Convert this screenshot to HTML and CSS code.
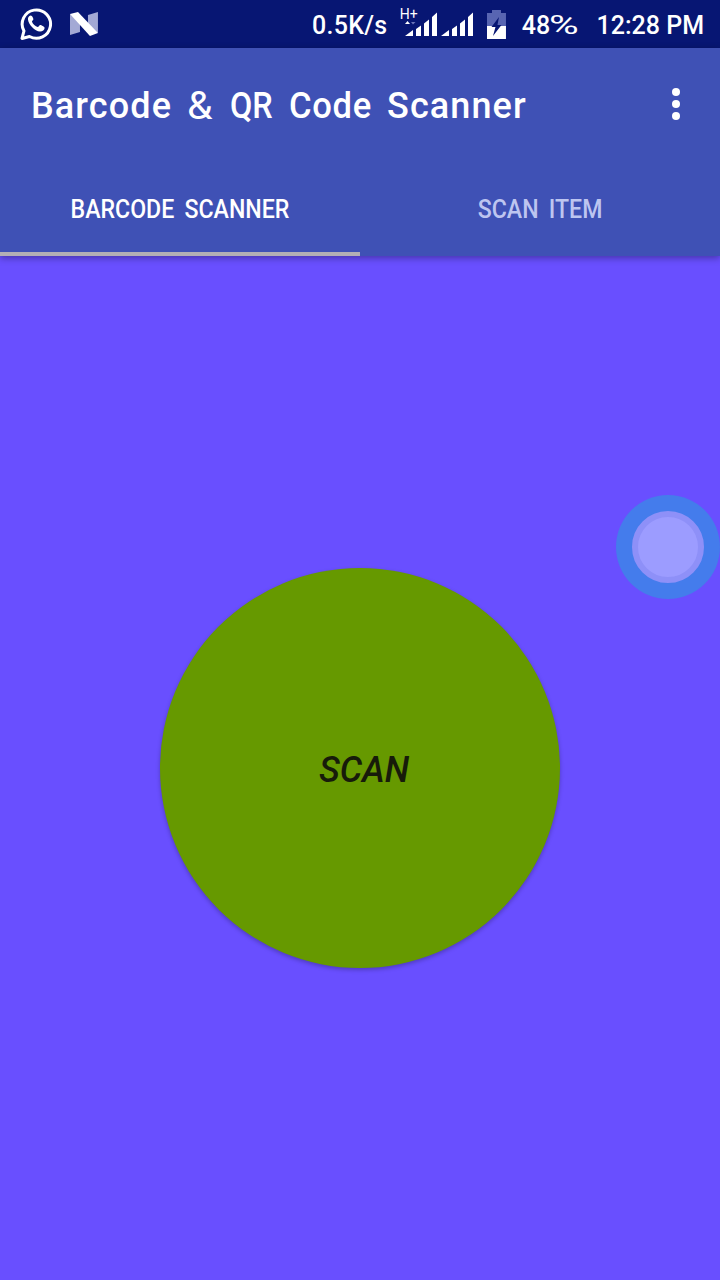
FILE: index.html
```html
<!DOCTYPE html>
<html lang="en">
<head>
<meta charset="utf-8">
<title>Barcode &amp; QR Code Scanner</title>
<link rel="stylesheet" href="styles.css">
</head>
<body>
<header class="status">
  <svg class="whatsapp" viewBox="0 0 34 34" width="34" height="34">
    <path d="M3 31.500 5 24A14.200 14.200 0 1 1 10.500 29.500Z" fill="none" stroke="#fff" stroke-width="3" stroke-linejoin="round"/>
    <path d="M11.700 8.500c-1.900.3-2.900 2.100-2.700 4 .5 4.800 6.800 12 12.100 12 2.400 0 4.600-1.400 4.600-3.700 0-1-3.400-2.700-4.300-2.800-1-.1-1.800 2.300-2.700 2.100-2.200-.5-4.900-3.200-5.700-5.300-.3-.9 1.400-1.700 1.400-2.600 0-.7-1.200-3.800-2.700-3.700Z" fill="#fff"/>
  </svg>
  <svg class="nougat" viewBox="0 0 30 26" width="30" height="26">
    <path d="M1 3 11 9V21L1 24ZM19 4 29 1V22L19 16Z" fill="#a3a9d5"/>
    <path d="M1 3 9 1 29 22 21 25Z" fill="#fff"/>
  </svg>
  <span class="speed">0.5K/s</span>
  <div class="signal">
    <span class="network">H+</span>
    <svg viewBox="0 0 74 30" width="74" height="30">
      <path d="M5 13 7.500 10 10 13Z" fill="#fff"/><path d="M11 11H15.500L13 13.500Z" fill="#6c75b9"/>
      <path d="M5 25 13 19V25ZM16 18 21 14.500V25H16ZM24 12.500 29 8.500V25H24ZM32 6 37 1.500V25H32ZM41 25 49 19V25ZM52 18 57 14.500V25H52ZM60 12.500 65 8.500V25H60ZM68 6 73 1.500V25H68Z" fill="#fff"/>
    </svg>
  </div>
  <svg class="battery" viewBox="0 0 19 29" width="19" height="29">
    <path d="M0 3H5V0H14V3H19V16H0Z" fill="#5865b2"/>
    <path d="M0 16H19V29H0Z" fill="#fff"/>
    <path d="M12 7 4.500 17H8.500L6 26 14.500 15H10.500Z" fill="#071673"/>
  </svg>
  <span class="percent">48<span class="sign">%</span></span>
  <span class="clock">12:28 PM</span>
</header>
<div class="appbar">
  <div class="toolbar">
    <h1 class="title"><span class="w1">Barcode</span> <span class="w2">&amp;</span> <span class="w3">QR</span> <span class="w4">Code</span> <span class="w5">Scanner</span></h1>
    <svg class="more" viewBox="0 0 8 32" width="8" height="32"><circle cx="4" cy="4" r="4"/><circle cx="4" cy="16" r="4"/><circle cx="4" cy="28" r="4"/></svg>
  </div>
  <nav class="tabs">
    <div class="tab active"><span class="tab-label">BARCODE SCANNER</span></div>
    <div class="tab"><span class="tab-label">SCAN ITEM</span></div>
  </nav>
</div>
<main class="content">
  <button class="scan"><span class="scan-label">SCAN</span></button>
  <div class="assist"><div class="assist-dot"></div></div>
</main>
</body>
</html>
```
FILE: styles.css
```css
* { box-sizing: border-box; }
body { margin: 0; width: 720px; height: 1280px; overflow: hidden; background: #694fff; font-family: Roboto, sans-serif; color: #fff; display: flex; flex-direction: column; }
.status { height: 48px; flex: none; background: #071673; display: flex; align-items: center; padding: 0 16px 0 19px; font-size: 25px; font-weight: 500; line-height: 48px; white-space: nowrap; }
.status > span { padding-top: 4px; }
.nougat { margin-left: 16px; }
.speed { width: 89px; margin-left: 213px; letter-spacing: .3px; }
.signal { position: relative; width: 74px; height: 30px; margin: -4px 0 0 -1px; padding-top: 2px; }
.signal svg { display: block; margin-top: 2px; }
.network { position: absolute; left: 0; top: -1px; font-size: 14px; line-height: 16px; font-weight: 400; }
.battery { margin-left: 13px; }
.percent { margin-left: 16px; width: 75px; display: flex; }
.sign { font-weight: 400; transform: scale(1.62, 1.05); transform-origin: 0 50%; margin-left: -1px; }
.clock { flex: 1; }
.appbar { height: 208px; flex: none; background: #3f51b5; box-shadow: 0 2px 7px rgba(0,0,0,.35); z-index: 1; }
.toolbar { height: 112px; display: flex; align-items: center; justify-content: space-between; padding: 0 40px 0 32px; }
.title { margin: 0 0 0 -1px; padding-top: 3px; font-size: 36px; font-weight: 500; line-height: 44px; white-space: nowrap; display: flex; }
.title span { transform-origin: 0 50%; }
.w1 { width: 156px; letter-spacing: 1.1px; }
.w2 { width: 43px; font-weight: 400; transform: scale(1.14, 1.1); }
.w3 { width: 59px; transform: scaleX(.9); }
.w4 { width: 98px; transform: scaleX(.96); letter-spacing: .7px; }
.w5 { letter-spacing: 1.1px; }
.more { fill: #fff; }
.tabs { height: 96px; display: flex; }
.tab { width: 360px; height: 96px; padding-top: 1px; text-align: center; font-size: 26px; font-weight: 500; line-height: 96px; color: #bdc5f0; white-space: nowrap; }
.tab-label { display: inline-block; transform: scaleX(.89); word-spacing: 5px; }
.active { color: #fff; border-bottom: 4px solid #b3afb5; }
.active .tab-label { line-height: 95px; height: 91px; }
.content { position: relative; flex: 1; display: flex; align-items: center; justify-content: center; }
.scan { width: 400px; height: 400px; padding: 4px 0 0 8px; border: 0; border-radius: 50%; background: #669900; box-shadow: 0 2px 4px rgba(0,0,0,.25); font: italic 500 36px/44px Roboto, sans-serif; color: #171b0a; }
.scan-label { display: inline-block; transform: scaleX(.98); }
.assist { position: absolute; left: 616px; top: 239px; width: 104px; height: 104px; border-radius: 50%; background: #447cec; display: flex; align-items: center; justify-content: center; }
.assist-dot { width: 72px; height: 72px; border-radius: 50%; background: #9c9cff; border: 6px solid #8e90f8; }
```
